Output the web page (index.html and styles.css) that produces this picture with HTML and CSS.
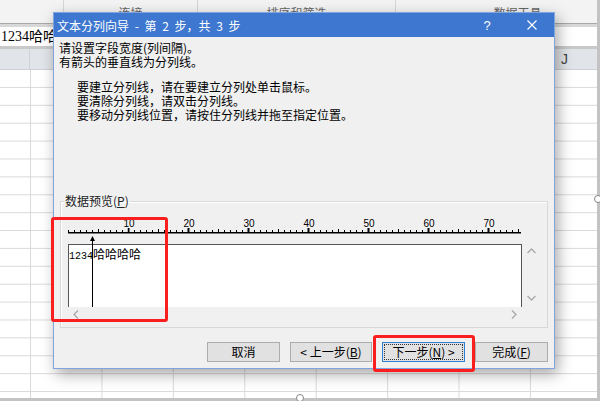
FILE: index.html
```html
<!DOCTYPE html>
<html lang="zh-CN">
<head>
    <meta charset="UTF-8">
    <title>文本分列向导</title>
    <link rel="stylesheet" href="styles.css">
</head>
<body>
    <div class="excel">
        <div class="sheet">
            <div class="ribbon">
                <div class="group g1"></div>
                <div class="group g2">连接</div>
                <div class="group g3">排序和筛选</div>
                <div class="group g4">数据工具</div>
            </div>
            <div class="ribbon-edge"></div>
            <div class="formula-bar">1234哈哈哈哈</div>
            <div class="formula-edge"></div>
            <div class="col-headers">
                <span></span><span></span><span></span><span></span><span></span>
                <span></span><span></span><span></span><span>J</span>
            </div>
            <div class="grid"></div>
            <div class="hbar"></div>
        </div>
        <div class="vbar"></div>
    </div>
    <span class="handle handle-bottom"></span>
    <span class="handle handle-right"></span>

    <div class="dialog">
        <div class="titlebar">
            <span class="title">文本分列向导 - 第 2 步，共 3 步</span>
            <span class="help">?</span>
            <span class="close">
                <svg width="10" height="10" viewBox="0 0 10 10"><path d="M0.5 0.5 L9.5 9.5 M9.5 0.5 L0.5 9.5" stroke="#fff" stroke-width="1.2" fill="none"/></svg>
            </span>
        </div>
        <div class="content">
            <div class="intro">
                请设置字段宽度(列间隔)。<br>
                有箭头的垂直线为分列线。
            </div>
            <div class="tips">
                要建立分列线，请在要建立分列处单击鼠标。<br>
                要清除分列线，请双击分列线。<br>
                要移动分列线位置，请按住分列线并拖至指定位置。
            </div>

            <fieldset class="preview-group">
                <legend>数据预览(<u>P</u>)</legend>
                <div class="preview-inner">
                    <svg class="ruler" width="454" height="20" viewBox="0 0 454 20">
                        <defs>
                            <pattern id="minor" width="6" height="2" patternUnits="userSpaceOnUse">
                                <rect width="1" height="2" fill="#000"/>
                            </pattern>
                            <pattern id="mid" x="30" width="60" height="3" patternUnits="userSpaceOnUse">
                                <rect width="1" height="3" fill="#000"/>
                            </pattern>
                            <pattern id="major" x="-0.5" width="60" height="4" patternUnits="userSpaceOnUse">
                                <rect width="2" height="4" fill="#000"/>
                            </pattern>
                        </defs>
                        <rect x="0" y="14" width="451" height="2" fill="url(#minor)"/>
                        <rect x="0" y="13" width="451" height="3" fill="url(#mid)"/>
                        <rect x="59.5" y="12" width="392" height="4" fill="url(#major)"/>
                        <rect x="0" y="16" width="453" height="1.5" fill="#000"/>
                        <g class="ruler-labels" text-anchor="middle">
                            <text x="61" y="11">10</text>
                            <text x="121" y="11">20</text>
                            <text x="181" y="11">30</text>
                            <text x="241" y="11">40</text>
                            <text x="301" y="11">50</text>
                            <text x="361" y="11">60</text>
                            <text x="421" y="11">70</text>
                        </g>
                    </svg>

                    <div class="preview">
                        <div class="data"><span class="mono">1234</span>哈哈哈哈</div>
                        <div class="vscroll">
                            <svg width="9" height="6" viewBox="0 0 9 6"><path d="M0.5 5 L4.5 1 L8.5 5" stroke="#a8a8a8" stroke-width="1.3" fill="none"/></svg>
                            <svg width="9" height="6" viewBox="0 0 9 6"><path d="M0.5 1 L4.5 5 L8.5 1" stroke="#a8a8a8" stroke-width="1.3" fill="none"/></svg>
                        </div>
                        <div class="hscroll">
                            <svg width="6" height="9" viewBox="0 0 6 9"><path d="M5 0.5 L1 4.5 L5 8.5" stroke="#a8a8a8" stroke-width="1.3" fill="none"/></svg>
                            <svg width="6" height="9" viewBox="0 0 6 9"><path d="M1 0.5 L5 4.5 L1 8.5" stroke="#a8a8a8" stroke-width="1.3" fill="none"/></svg>
                        </div>
                        <div class="corner"></div>
                        <svg class="break-line" width="5" height="71" viewBox="0 0 5 71">
                            <path d="M0 5 L2.5 0 L5 5 Z" fill="#000"/>
                            <rect x="2" y="4" width="1" height="67" fill="#000"/>
                        </svg>
                    </div>
                </div>
            </fieldset>

            <div class="buttons">
                <button class="btn w-cancel">取消</button>
                <button class="btn w-step">&lt; 上一步(<u>B</u>)</button>
                <button class="btn w-next default">下一步(<u>N</u>) &gt;</button>
                <button class="btn w-cancel">完成(<u>F</u>)</button>
            </div>
        </div>
    </div>

    <div class="mark mark-preview"></div>
    <div class="mark mark-next"></div>
</body>
</html>
```

FILE: styles.css
```css
html, body {
    margin: 0;
}
body {
    width: 600px;
    height: 401px;
    overflow: hidden;
    position: relative;
    background: #fff;
    font-family: "Noto Sans CJK SC", sans-serif;
    font-size: 12px;
    color: #000;
}

/* excel in the background */
.excel {
    display: flex;
    height: 401px;
}
.sheet {
    flex: 1;
    display: flex;
    flex-direction: column;
    min-width: 0;
}
.vbar {
    width: 3px;
    background: #c3c3c3;
}
.ribbon {
    height: 23px;
    display: flex;
    background: #f3f3f3;
    overflow: hidden;
}
.ribbon .group {
    flex: none;
    box-sizing: border-box;
    border-right: 1px solid #d6d6d6;
    color: #666;
    text-align: center;
    line-height: 14px;
    padding-top: 6px;
}
.g1 { width: 64px; }
.g2 { width: 134px; }
.g3 { width: 198px; }
.g4 { width: 244px; border-right: none; }
.ribbon-edge {
    height: 4px;
    background: linear-gradient(#a9a9a9 0 1px, #d8d8d8 1px);
}
.formula-bar {
    height: 19px;
    line-height: 19px;
    padding-left: 1px;
    background: #fff;
    font-family: "Liberation Serif", "Noto Sans CJK SC", serif;
    font-size: 14px;
}
.formula-edge {
    height: 3px;
    background: #c9c9c9;
}
.col-headers {
    height: 20px;
    display: grid;
    grid-template-columns: 30px repeat(7, 71.43px) 1fr;
    background: #e1e4e8;
    border-bottom: 1px solid #cdd0d4;
}
.col-headers span {
    border-right: 1px solid #cfd2d6;
    text-align: center;
    line-height: 20px;
    font-family: "Liberation Sans", sans-serif;
    font-size: 14px;
    color: #444;
}
.col-headers span:last-child {
    border-right: none;
    padding-left: 2px;
}
.grid {
    flex: 1;
    background-image:
        linear-gradient(to right, #dadada 0 1px, transparent 1px),
        linear-gradient(to bottom, transparent 0 16.9px, #dadada 16.9px 17.9px);
    background-size: 71.43px 100%, 100% 17.9px;
    background-position: 30px 0, 0 0;
    background-repeat: repeat-x, repeat;
}
.hbar {
    height: 3px;
    background: #c3c3c3;
}
.handle {
    position: absolute;
    width: 6px;
    height: 6px;
    border: 1px solid #888;
    border-radius: 50%;
    background: #fff;
}
.handle-bottom { left: 296px; top: 394px; }
.handle-right { left: 594px; top: 195px; }

/* dialog */
.dialog {
    position: absolute;
    left: 53px;
    top: 12px;
    width: 500px;
    height: 355px;
    border: 1px solid #7fa4de;
    background: #f0f0f0;
    box-shadow: 3px 5px 14px rgba(0, 0, 0, 0.35);
    display: flex;
    flex-direction: column;
}
.titlebar {
    height: 24px;
    flex: none;
    display: flex;
    align-items: center;
    padding-left: 3px;
    background: #3d77d0;
    color: #fff;
}
.title {
    flex: 1;
    word-spacing: 3px;
}
.help {
    width: 12px;
    text-align: center;
    margin-right: 32px;
    font-family: "Liberation Sans", sans-serif;
    font-size: 13px;
}
.close {
    width: 14px;
    display: flex;
    justify-content: center;
    margin-right: 15px;
}
.content {
    flex: 1;
    display: flex;
    flex-direction: column;
    padding: 4px 0 0 5px;
}
.intro, .tips {
    line-height: 14px;
}
.tips {
    margin-top: 11px;
    padding-left: 18px;
}
.preview-group {
    width: 488px;
    box-sizing: border-box;
    margin: 72px 0 0 1px;
    padding: 0 0 5px 0;
    border: 1px solid #d8d8d8;
    box-shadow: inset 1px 1px 0 #fff;
    min-width: 0;
}
.preview-group legend {
    margin-left: 3px;
    padding: 0 1px;
    line-height: 14px;
    color: #222;
}
.preview-inner {
    padding-left: 7px;
}
.ruler {
    display: block;
    margin-top: 8px;
}
.ruler-labels {
    font-family: "Liberation Sans", sans-serif;
    font-size: 10px;
    fill: #000;
}
.preview {
    position: relative;
    width: 472px;
    margin-top: 8px;
    display: grid;
    grid-template-columns: 454px 18px;
    grid-template-rows: 63px 15px;
}
.data {
    background: #fff;
    border: 1px solid #555;
    border-bottom: none;
    padding-top: 2px;
    line-height: 14px;
    font-size: 12px;
}
.mono {
    font-family: "Liberation Mono", monospace;
    font-size: 10px;
}
.vscroll {
    display: flex;
    flex-direction: column;
    justify-content: space-between;
    align-items: center;
    padding: 4px 0 6px;
}
.hscroll {
    display: flex;
    justify-content: space-between;
    align-items: center;
    padding: 0 5px;
}
.break-line {
    position: absolute;
    left: 22px;
    top: -8px;
}
.buttons {
    margin-top: 14px;
    display: flex;
    justify-content: flex-end;
    gap: 10px;
    padding-right: 6px;
}
.btn {
    height: 20px;
    box-sizing: border-box;
    padding: 0;
    background: #e1e1e1;
    border: 1px solid #adadad;
    font-family: "Noto Sans CJK SC", sans-serif;
    font-size: 12px;
    line-height: 16px;
    color: #000;
}
.w-cancel { width: 73px; }
.w-step { width: 82px; }
.w-next { width: 83px; }
.btn.default {
    border-color: #2d7fd8;
    outline: 1px dotted #333;
    outline-offset: -3px;
}

/* red annotations */
.mark {
    position: absolute;
    border: 3px solid #fa1e1e;
    border-radius: 3px;
}
.mark-preview {
    left: 51px;
    top: 217px;
    width: 111px;
    height: 99px;
}
.mark-next {
    left: 373px;
    top: 335px;
    width: 96px;
    height: 31px;
}
```
